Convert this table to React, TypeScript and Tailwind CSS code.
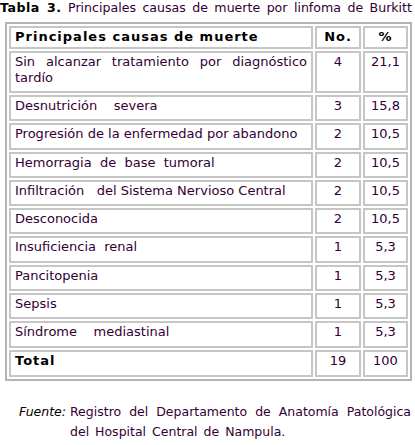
const rows = [
  { cause: "Sin alcanzar tratamiento por diagnóstico tardío", n: "4", pct: "21,1", tall: true },
  { cause: "Desnutrición\u00a0\u00a0\u00a0 severa", n: "3", pct: "15,8" },
  { cause: "Progresión de la enfermedad por abandono", n: "2", pct: "10,5" },
  { cause: "Hemorragia\u00a0 de\u00a0 base\u00a0 tumoral", n: "2", pct: "10,5" },
  { cause: "Infiltración\u00a0\u00a0 del Sistema Nervioso Central", n: "2", pct: "10,5" },
  { cause: "Desconocida", n: "2", pct: "10,5" },
  { cause: "Insuficiencia\u00a0 renal", n: "1", pct: "5,3" },
  { cause: "Pancitopenia", n: "1", pct: "5,3" },
  { cause: "Sepsis", n: "1", pct: "5,3" },
  { cause: "Síndrome\u00a0\u00a0\u00a0 mediastinal", n: "1", pct: "5,3" },
];

const cell = "border-2 border-[#c6c6c6] align-top px-[4px] pt-[1px]";
const bold = "font-bold text-black tracking-[1px]";

export default function App() {
  return (
    <div className="w-[415px] h-[445px] bg-white text-[13px] leading-[16px] text-[#330033] font-['DejaVu_Sans',Verdana,sans-serif]">
      <p className="w-[412px] text-justify [text-align-last:justify] text-[12.6px]">
        <b className="text-black tracking-[0.5px]">Tabla 3.</b> Principales causas de muerte por linfoma de Burkitt
      </p>

      <table className="mt-[6px] ml-[5px] w-[407px] border-separate border-spacing-[2px] border-2 border-[#b4b4b4]">
        <colgroup>
          <col className="w-[304px]" />
          <col className="w-[46px]" />
          <col />
        </colgroup>
        <thead>
          <tr className="h-[23px]">
            <th className={`${cell} text-left ${bold}`}>Principales causas de muerte</th>
            <th className={`${cell} text-center ${bold}`}>No.</th>
            <th className={`${cell} text-center ${bold}`}>%</th>
          </tr>
        </thead>
        <tbody>
          {rows.map((r) => (
            <tr key={r.cause} className={r.tall ? "h-[42px]" : "h-[26.3px]"}>
              <td className={`${cell} text-justify`}>{r.cause}</td>
              <td className={`${cell} text-center`}>{r.n}</td>
              <td className={`${cell} text-center`}>{r.pct}</td>
            </tr>
          ))}
          <tr className="h-[27px]">
            <td className={`${cell} ${bold}`}>Total</td>
            <td className={`${cell} text-center`}>19</td>
            <td className={`${cell} text-center`}>100</td>
          </tr>
        </tbody>
      </table>

      <div className="mt-[21px] flex text-[12.5px] leading-[20px]">
        <span className="w-[66px] shrink-0 text-right italic text-black">Fuente:</span>
        <div className="ml-[4px] w-[341px]">
          <p className="text-justify [text-align-last:justify]">Registro del Departamento de Anatomía Patológica</p>
          <p className="[word-spacing:2px]">del Hospital Central de Nampula.</p>
        </div>
      </div>
    </div>
  );
}
